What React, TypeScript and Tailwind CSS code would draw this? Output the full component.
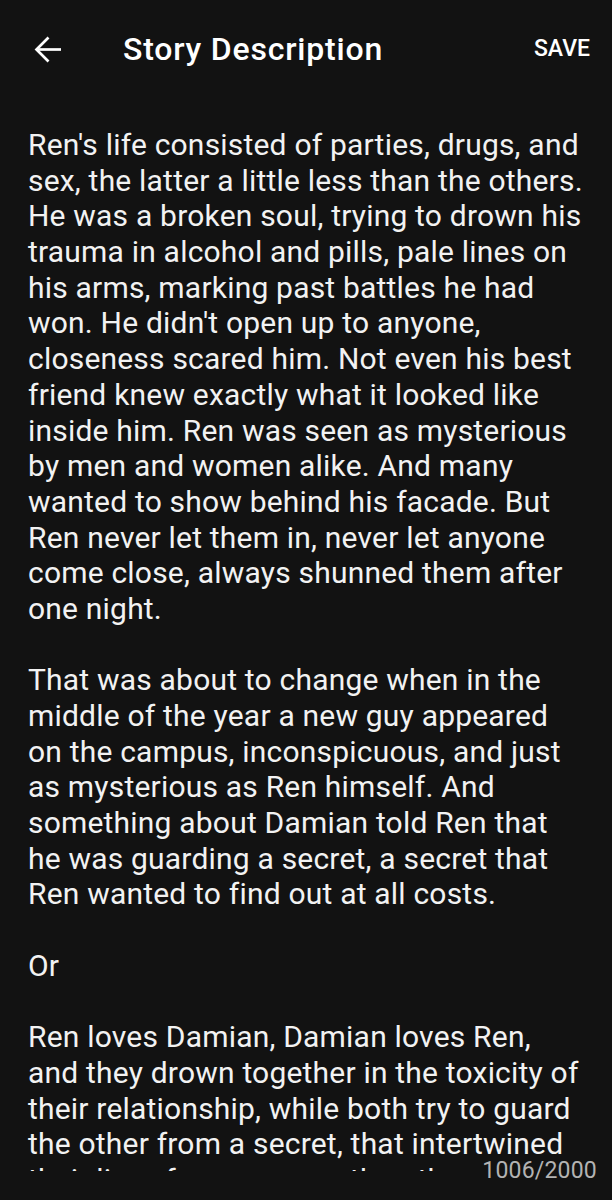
import React from 'react';

// Line breaks follow the wrapping of the original text field.
const lines = [
  "Ren's life consisted of parties, drugs, and",
  'sex, the latter a little less than the others.',
  'He was a broken soul, trying to drown his',
  'trauma in alcohol and pills, pale lines on',
  'his arms, marking past battles he had',
  "won. He didn't open up to anyone,",
  'closeness scared him. Not even his best',
  'friend knew exactly what it looked like',
  'inside him. Ren was seen as mysterious',
  'by men and women alike. And many',
  'wanted to show behind his facade. But',
  'Ren never let them in, never let anyone',
  'come close, always shunned them after',
  'one night.',
  '',
  'That was about to change when in the',
  'middle of the year a new guy appeared',
  'on the campus, inconspicuous, and just',
  'as mysterious as Ren himself. And',
  'something about Damian told Ren that',
  'he was guarding a secret, a secret that',
  'Ren wanted to find out at all costs.',
  '',
  'Or',
  '',
  'Ren loves Damian, Damian loves Ren,',
  'and they drown together in the toxicity of',
  'their relationship, while both try to guard',
  'the other from a secret, that intertwined',
  'their lives forever, more than they both know.',
];

const BackArrow = () => (
  <svg width="27" height="27" viewBox="0 0 27 27" fill="none" stroke="currentColor" strokeWidth="2.7">
    <path d="M27 13.5H2.5" />
    <path d="M14.5 1.5L2.5 13.5L14.5 25.5" />
  </svg>
);

export default function App() {
  return (
    <div className="h-[1200px] w-[612px] overflow-hidden bg-[#121212] text-[#f2f2f2] font-['Roboto',sans-serif]">
      {/* Toolbar */}
      <div className="flex h-[98px] items-center pl-[34px] pr-[22px]">
        <button className="flex h-[27px] w-[27px] items-center justify-center text-white">
          <BackArrow />
        </button>
        <h1 className="ml-[62px] flex-1 text-[32px] font-medium tracking-[0.8px] text-white">Story Description</h1>
        <button className="text-[23px] font-medium text-white">SAVE</button>
      </div>

      {/* Description field */}
      <div className="relative h-[1102px]">
        <div className="h-[1073px] overflow-hidden pl-[28px] pr-[14px] pt-[29px]">
          <p className="whitespace-pre text-[30px] leading-[35.68px] tracking-[0.2px]">{lines.join('\n')}</p>
        </div>
        <span className="absolute right-[15px] top-[1059px] bg-[#121212] pl-[14px] text-[23px] leading-[28px] tracking-[0.2px] text-[#b3b3b3]">1006/2000</span>
      </div>
    </div>
  );
}
